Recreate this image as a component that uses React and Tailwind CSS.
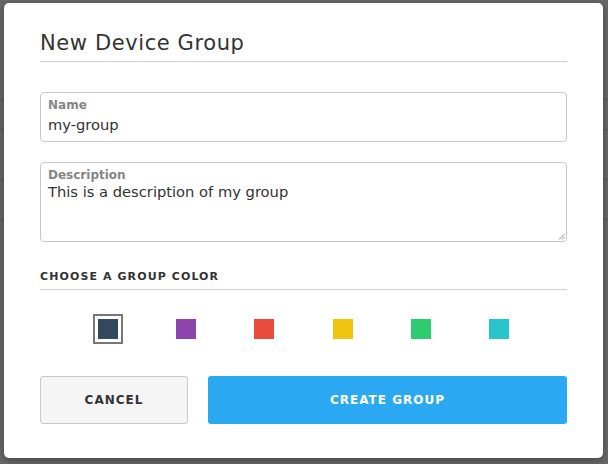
import React from "react";

const colors = ["#34495e", "#8e44ad", "#e74c3c", "#f1c40f", "#2ecc71", "#27c4cb"];

export default function App() {
  return (
    <div
      className="relative w-[608px] h-[464px] overflow-hidden bg-[#686868]"
      style={{ fontFamily: '"DejaVu Sans", "Noto Sans", sans-serif' }}
    >
      {/* backdrop hints */}
      <div className="absolute left-0 top-[99px] w-full h-px bg-[#5a5a5a]" />
      <div className="absolute left-0 top-[129px] w-full h-px bg-[#5a5a5a]" />
      <div className="absolute left-0 top-[179px] w-full h-px bg-[#5a5a5a]" />
      <div className="absolute left-0 top-[219px] w-full h-px bg-[#5a5a5a]" />

      <div className="absolute left-[4px] top-[3px] w-[599px] h-[455px] bg-white rounded-[5px] shadow-[0_2px_8px_rgba(0,0,0,0.35)] px-9 flex flex-col">
        <div className="pt-[28px] pb-[6px] border-b border-[#cfcfcf]">
          <h1 className="text-[21px] leading-[24px] tracking-[0.6px] text-[#333]">New Device Group</h1>
        </div>

        <div className="mt-[30px] h-[50px] border border-[#c8c8c8] rounded-[4px] px-[7px] pt-[4px]">
          <div className="text-[12px] leading-[16px] text-[#858585] font-semibold">Name</div>
          <div className="text-[14.7px] leading-[24px] text-[#333]">my-group</div>
        </div>

        <div className="mt-[20px] h-[80px] border border-[#c8c8c8] rounded-[4px] px-[7px] pt-[4px] relative">
          <div className="text-[12px] leading-[16px] text-[#858585] font-semibold">Description</div>
          <div className="text-[14.7px] leading-[18px] text-[#333]">This is a description of my group</div>
          <svg className="absolute right-[1px] bottom-[1px]" width="7" height="7" viewBox="0 0 7 7">
            <path d="M6.5 1 L1 6.5 M6.5 4 L4 6.5" stroke="#888" strokeWidth="1" />
          </svg>
        </div>

        <div className="mt-[28px] pb-[5px] border-b border-[#cfcfcf]">
          <h2 className="text-[11px] leading-[14px] font-bold tracking-[1.1px] text-[#333]">CHOOSE A GROUP COLOR</h2>
        </div>

        <div className="mt-[24px] flex justify-center gap-[48.4px]">
          {colors.map((c, i) => (
            <div
              key={c}
              className={
                i === 0
                  ? "w-[30px] h-[30px] border-2 border-[#777] flex items-center justify-center"
                  : "w-[30px] h-[30px] flex items-center justify-center"
              }
            >
              <div className="w-[20px] h-[20px]" style={{ backgroundColor: c }} />
            </div>
          ))}
        </div>

        <div className="mt-[32px] flex gap-[20px]">
          <button className="w-[148px] h-[48px] bg-[#f5f5f5] border border-[#c8c8c8] rounded-[3px] text-[12px] font-bold tracking-[1px] text-[#333]">
            CANCEL
          </button>
          <button className="flex-1 h-[48px] bg-[#2aa9f2] rounded-[3px] text-[12px] font-bold tracking-[1px] text-white">
            CREATE GROUP
          </button>
        </div>
      </div>
    </div>
  );
}
